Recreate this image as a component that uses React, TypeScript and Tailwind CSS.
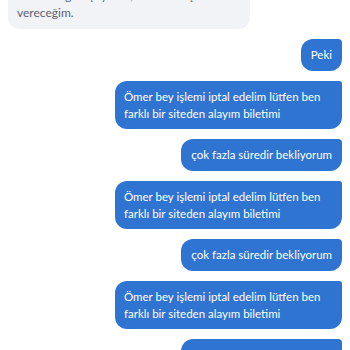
const messages = [
  { text: "Peki", kind: "short" },
  { text: "Ömer bey işlemi iptal edelim lütfen ben farklı bir siteden alayım biletimi", kind: "long" },
  { text: "çok fazla süredir bekliyorum", kind: "short" },
  { text: "Ömer bey işlemi iptal edelim lütfen ben farklı bir siteden alayım biletimi", kind: "long" },
  { text: "çok fazla süredir bekliyorum", kind: "short" },
  { text: "Ömer bey işlemi iptal edelim lütfen ben farklı bir siteden alayım biletimi", kind: "long" },
  { text: "çok fazla süredir bekliyorum", kind: "short" },
];

export default function App() {
  return (
    <div
      className="w-[350px] h-[350px] overflow-hidden bg-white"
      style={{ fontFamily: "Lato, 'Noto Sans', sans-serif" }}
    >
      <div className="flex flex-col px-2 -mt-[18px]">
        <div className="self-start w-[242px] rounded-xl bg-[#f1f3f7] px-[9px] pt-[5px] pb-[8px] text-[12px] leading-[17px] text-[#5b6272]">
          Firma ile görüşüyoruz, nasıl sonuç alırsam
          <br />
          vereceğim.
        </div>

        <div className="flex flex-col items-end gap-[10px] mt-[10px]">
          {messages.map((m, i) => (
            <div
              key={i}
              className={
                m.kind === "long"
                  ? "w-[227px] rounded-xl rounded-tr-[3px] bg-[#2f74d0] px-[9px] py-[7px] text-[11.5px] leading-[17px] text-white"
                  : "rounded-xl rounded-tr-[4px] bg-[#2f74d0] px-[10px] py-[7px] text-[11.5px] leading-[18px] text-white"
              }
            >
              {m.text}
            </div>
          ))}
        </div>
      </div>
    </div>
  );
}
